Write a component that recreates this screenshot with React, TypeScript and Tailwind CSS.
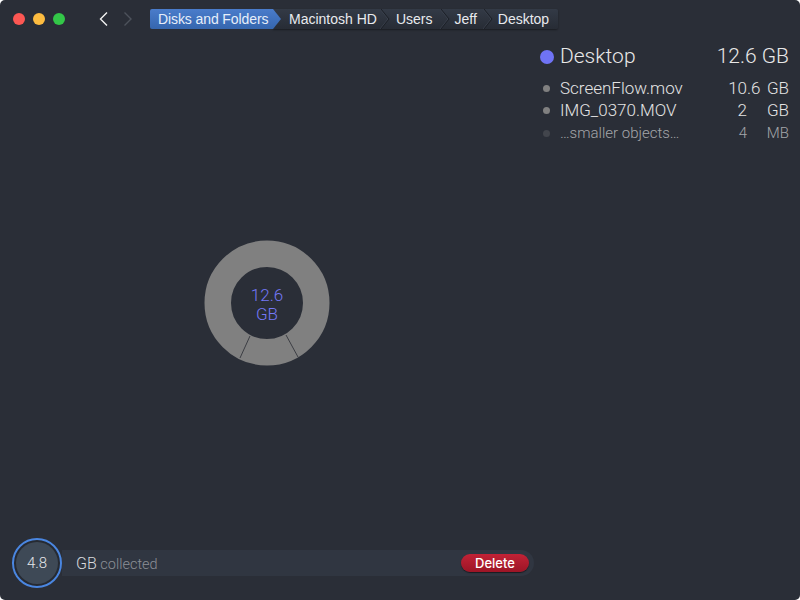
import React from "react";

function Sep() {
  return (
    <svg width="10" height="20" viewBox="0 0 10 20" className="shrink-0 block" fill="none">
      <path d="M0 0 L8 10 L0 20" stroke="#3a414d" strokeWidth="1" />
      <path d="M1 0 L9 10 L1 20" stroke="#1c2027" strokeWidth="1" />
    </svg>
  );
}

function Row({ dot, name, int, frac, unit, cls }: { dot: string; name: string; int: string; frac: string; unit: string; cls: string }) {
  return (
    <div className={`flex items-center ${cls}`}>
      <div className={`w-[7px] h-[7px] rounded-full ml-[3px] mr-[10px] ${dot}`} />
      <div className="flex-1">{name}</div>
      <div className="w-[40px] text-right">{int}</div>
      <div className="w-[13px]">{frac}</div>
      <div className="w-[29px] text-right">{unit}</div>
    </div>
  );
}

export default function App() {
  return (
    <div className="w-[800px] h-[600px] bg-white overflow-hidden font-['Roboto',sans-serif]">
      <div className="w-full h-full bg-[#2a2e37] rounded-[5px] flex flex-col overflow-hidden">
        <div className="h-[38px] flex items-center shrink-0">
          <div className="flex gap-[8px] ml-[13px]">
            <div className="w-[12px] h-[12px] rounded-full bg-[#fc5753]" />
            <div className="w-[12px] h-[12px] rounded-full bg-[#fdbc40]" />
            <div className="w-[12px] h-[12px] rounded-full bg-[#33c748]" />
          </div>
          <svg width="10" height="14" viewBox="0 0 10 14" className="ml-[34px]" fill="none">
            <path d="M8 0.5 L1.5 7 L8 13.5" stroke="#f2f2f2" strokeWidth="1.4" />
          </svg>
          <svg width="10" height="14" viewBox="0 0 10 14" className="ml-[14px]" fill="none">
            <path d="M1.5 0.5 L8 7 L1.5 13.5" stroke="#4d525b" strokeWidth="1.4" />
          </svg>
          <div className="flex h-[20px] ml-[17px] text-[14px] leading-[20px] font-['Liberation_Sans',sans-serif] text-[#e8eaee]">
            <div className="relative z-10 w-[131px] pl-[8px] -mr-[8px] bg-gradient-to-b from-[#4a7ccb] to-[#3566ae] [clip-path:polygon(0_0,123px_0,100%_50%,123px_100%,0_100%,0_0)] rounded-l-[2px] text-[#e6eefa]">
              <span className="inline-block tracking-[-0.1px]">Disks and Folders</span>
            </div>
            <div className="flex items-center w-[285px] bg-gradient-to-b from-[#333a46] to-[#272c35] rounded-r-[2px] shadow-[0_1px_2px_rgba(0,0,0,0.4)]">
              <span className="ml-[16px]">Macintosh HD</span>
              <span className="ml-[3px]"><Sep /></span>
              <span className="ml-[6px]">Users</span>
              <span className="ml-[8px]"><Sep /></span>
              <span className="ml-[4px]">Jeff</span>
              <span className="ml-[6px]"><Sep /></span>
              <span className="ml-[5px]">Desktop</span>
            </div>
          </div>
        </div>

        <div className="flex-1 flex min-h-0">
          <div className="w-[534px] flex items-center justify-center pt-[36px]">
            <div className="relative w-[126px] h-[126px]">
              <svg width="126" height="126" viewBox="0 0 126 126">
                <circle cx="63" cy="63" r="49.25" fill="none" stroke="#808080" strokeWidth="26.5" />
                <path d="M46 96 L36 118 M82 95 L94 117" stroke="#3c3e44" strokeWidth="1" />
              </svg>
              <div className="absolute inset-0 flex flex-col items-center justify-center pt-[4px] text-[17px] leading-[19px] font-light text-[#7478f5]">
                <div>12.6</div>
                <div>GB</div>
              </div>
            </div>
          </div>
          <div className="flex-1 pl-[6px] pr-[11px] pt-[6px] font-light">
            <div className="flex items-center text-[21px] h-[26px] text-[#e8e8e8]">
              <div className="w-[14px] h-[14px] rounded-full bg-[#6f73f5] mr-[6px]" />
              <div className="flex-1">Desktop</div>
              <div>12.6 GB</div>
            </div>
            <div className="mt-[7px] flex flex-col">
              <Row dot="bg-[#808080]" name="ScreenFlow.mov" int="10" frac=".6" unit="GB" cls="text-[17px] h-[22.5px] text-[#e4e4e4]" />
              <Row dot="bg-[#808080]" name="IMG_0370.MOV" int="2" frac="" unit="GB" cls="text-[17px] h-[22.5px] text-[#e4e4e4]" />
              <Row dot="bg-[#42454c]" name="…smaller objects…" int="4" frac="" unit="MB" cls="text-[15px] h-[22.5px] text-[#a4a6aa]" />
            </div>
          </div>
        </div>

        <div className="h-[68px] shrink-0 flex items-start pl-[12px] pt-[6px]">
          <div className="relative z-10 w-[50px] h-[50px] rounded-full bg-[#262a32] border-2 border-[#4a86e0] flex items-center justify-center shrink-0">
            <div className="w-[42px] h-[42px] rounded-full bg-[#3e4956] flex items-center justify-center text-[15px] font-light text-[#e4e6e8]">4.8</div>
          </div>
          <div className="w-[472px] h-[26px] mt-[12px] bg-[#303641] rounded-r-[13px] flex items-center pl-[14px] pr-[5px]">
            <div className="flex-1 pt-[2px] text-[14.5px] font-light text-[#8b8f96]">
              <span className="text-[16px] text-[#d8dadd]">GB</span> collected
            </div>
            <div className="w-[68px] h-[18px] rounded-full bg-gradient-to-b from-[#c22236] to-[#9c1526] text-white text-[13px] leading-[18px] font-['Inter',sans-serif] font-medium text-center shadow-[0_1px_1px_rgba(0,0,0,0.5)]">Delete</div>
          </div>
        </div>
      </div>
    </div>
  );
}
